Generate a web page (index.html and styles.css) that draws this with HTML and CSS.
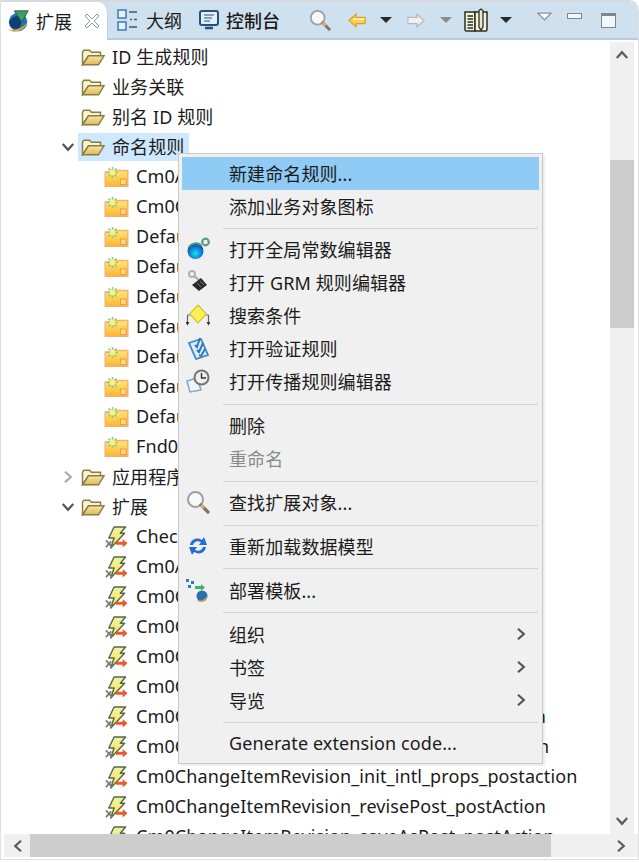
FILE: index.html
```html
<!DOCTYPE html>
<html lang="zh">
<head>
<meta charset="utf-8">
<title>扩展</title>
<link rel="stylesheet" href="styles.css">
</head>
<body>
<svg class="defs" width="0" height="0">
  <defs>
    <linearGradient id="ruleFill" x1="0" y1="0" x2="0" y2="1"><stop offset="0" stop-color="#ffe873"/><stop offset="1" stop-color="#fdb52f"/></linearGradient>
    <linearGradient id="boltFill" x1="0" y1="0" x2="0" y2="1"><stop offset="0" stop-color="#eef3a8"/><stop offset="1" stop-color="#ffe24a"/></linearGradient>
    <linearGradient id="folderFill" x1="0" y1="0" x2="0" y2="1"><stop offset="0" stop-color="#f6e6a6"/><stop offset="1" stop-color="#dcb957"/></linearGradient>
    <radialGradient id="ball" cx="0.500" cy="0.650" r="0.650"><stop offset="0" stop-color="#19e6ea"/><stop offset="0.550" stop-color="#0a82dc"/><stop offset="1" stop-color="#1b3f8f"/></radialGradient>
  </defs>
  <symbol id="folder" viewBox="0 0 24 17">
    <path d="M1.500 15.500V3L3 1.200H8.500L10.500 3.200H19.500V7H7.500L1.500 15.500Z" fill="#faf3cf" stroke="#8a7a45" stroke-width="1.400"/>
    <path d="M1.500 15.800L7.500 6.800H23L17.500 15.800Z" fill="url(#folderFill)" stroke="#8a7a45" stroke-width="1.400"/>
  </symbol>
  <symbol id="rule" viewBox="0 0 24 20">
    <path d="M.7 5H9L10 3.500H23.300V19.300H.7Z" fill="url(#ruleFill)" stroke="#f5ae74" stroke-width="1.400"/>
    <rect x="16" y="12" width="5.500" height="5.500" fill="#ffdc7c" stroke="#ee9c49" stroke-width="1"/>
    <path d="M8 0V11M2.500 5.500H13.500M4 1.500L12 9.500M12 1.500L4 9.500" stroke="#8fbf9f" stroke-width="1.600"/>
    <circle cx="8" cy="5.500" r="3" fill="#f7f56e"/>
  </symbol>
  <symbol id="bolt" viewBox="0 0 24 24">
    <path d="M10 1H22L16.500 7.500H21L6.500 23L10 12.500H4.500Z" fill="url(#boltFill)" stroke="#56684a" stroke-width="1.500" stroke-linejoin="round"/>
    <path d="M1.500 15L8 22M1.500 22L7 16" stroke="#74806a" stroke-width="1.800"/>
    <path d="M12 16.500H19V13.500L24 18L19 22.500V19.500H12Z" fill="#ea5a2c"/>
  </symbol>
  <symbol id="chev" viewBox="0 0 14 14">
    <path d="M4 1.800L9.800 7L4 12.200" fill="none" stroke="currentColor" stroke-width="2.200"/>
  </symbol>
  <symbol id="lens" viewBox="0 0 24 24">
    <circle cx="9.500" cy="9.500" r="7.500" fill="#f6f8fa" stroke="#9aa0a6" stroke-width="2"/>
    <path d="M15 15L22 22" stroke="#7a7467" stroke-width="3.200" stroke-linecap="round"/>
    <path d="M15 15L18 18" stroke="#e2b659" stroke-width="3"/>
  </symbol>
  <symbol id="drop" viewBox="0 0 12 6">
    <path d="M0 0H12L6 6Z" fill="currentColor"/>
  </symbol>
</svg>

<div class="window">
  <header class="tabbar">
    <div class="tab tab-active">
      <svg class="ic-tab" viewBox="0 0 26 26"><circle cx="12" cy="14" r="10" fill="#2a6fb0"/><path d="M2 14C5 8 12 6 17 8L14 20C9 23 4 21 2 14Z" fill="#0f3f6e"/><path d="M8 2H23L16 14Z" fill="#3f9f63" stroke="#1f5f49"/><path d="M1 22C8 24 15 22 22 15C19 23 8 28 1 22Z" fill="#e0a93a"/></svg>
      <span class="tab-label">扩展</span>
      <svg class="ic-close" viewBox="0 0 16 16"><path d="M3 1L8 6L13 1L15 3L10 8L15 13L13 15L8 10L3 15L1 13L6 8L1 3Z" fill="#fff" stroke="#8e959c"/></svg>
    </div>
    <div class="tab tab-outline">
      <svg class="ic-outline" viewBox="0 0 20 22"><rect x="1" y="1" width="8" height="8" fill="#e6f2fb" stroke="#2f74b5" stroke-width="1.400"/><rect x="1" y="13" width="8" height="8" fill="#e6f2fb" stroke="#2f74b5" stroke-width="1.400"/><path d="M12 3H20M13 10.500H15M17 10.500H20M12 18H20" stroke="#2f5f8a" stroke-width="1.600"/></svg>
      <span class="tab-label">大纲</span>
    </div>
    <div class="tab tab-console">
      <svg class="ic-console" viewBox="0 0 20 20"><rect x="1" y="1" width="18" height="14" rx="2" fill="#e6eef6" stroke="#24527f" stroke-width="2"/><path d="M5 5H15M5 8H13M5 11H11" stroke="#24527f"/><path d="M6 18H14" stroke="#24527f" stroke-width="2.500"/></svg>
      <span class="tab-label tab-bold">控制台</span>
    </div>
    <div class="tools">
      <svg class="t-search"><use href="#lens"/></svg>
      <svg class="t-back" viewBox="0 0 20 16"><path d="M1 8L9 1V4.500H19V11.500H9V15Z" fill="#ffd24d" stroke="#dc9f22" stroke-width="1.300"/><path d="M6 6.500H18" stroke="#fff3b5" stroke-width="2"/></svg>
      <svg class="t-drop t-drop-back"><use href="#drop"/></svg>
      <svg class="t-fwd" viewBox="0 0 20 16"><path d="M19 8L11 1V4.500H1V11.500H11V15Z" fill="#eef0f2" stroke="#b4b8bc" stroke-width="1.300"/></svg>
      <svg class="t-drop t-drop-fwd"><use href="#drop"/></svg>
      <svg class="t-book" viewBox="0 0 24 24"><path d="M1 4H11V23H2L1 22Z" fill="#f4f2d8" stroke="#2d2d26" stroke-width="1.500"/><path d="M11 4H23V22L22 23H11Z" fill="#f4f2d8" stroke="#2d2d26" stroke-width="1.500"/><path d="M3.500 8H9M3.500 11H9M3.500 14H9M3.500 17H9M3.500 20H9" stroke="#2d2d26" stroke-width="1.300"/><path d="M15 19V2.500L17 1L19 2.500V19L17 22Z" fill="#e9e7c8" stroke="#2d2d26" stroke-width="1.300"/></svg>
      <svg class="t-drop t-drop-book"><use href="#drop"/></svg>
      <svg class="t-view" viewBox="0 0 16 9"><path d="M1 1H15L8 8Z" fill="#fff" stroke="#8d949c" stroke-width="1.300"/></svg>
      <span class="t-min"></span>
      <span class="t-max"></span>
    </div>
  </header>

  <div class="body">
    <div class="main">
      <div class="tree">
        <div class="row l1"><span class="twist"></span><span class="node"><svg class="ic-folder"><use href="#folder"/></svg><span class="label">ID 生成规则</span></span></div>
        <div class="row l1"><span class="twist"></span><span class="node"><svg class="ic-folder"><use href="#folder"/></svg><span class="label">业务关联</span></span></div>
        <div class="row l1"><span class="twist"></span><span class="node"><svg class="ic-folder"><use href="#folder"/></svg><span class="label">别名 ID 规则</span></span></div>
        <div class="row l1"><svg class="twist twist-open"><use href="#chev"/></svg><span class="node node-sel"><svg class="ic-folder"><use href="#folder"/></svg><span class="label">命名规则</span></span></div>
        <div class="row l2"><svg class="ic-rule"><use href="#rule"/></svg><span class="label">Cm0AttrNamingRule</span></div>
        <div class="row l2"><svg class="ic-rule"><use href="#rule"/></svg><span class="label">Cm0ChangeNamingRule</span></div>
        <div class="row l2"><svg class="ic-rule"><use href="#rule"/></svg><span class="label">DefaultNamingRule</span></div>
        <div class="row l2"><svg class="ic-rule"><use href="#rule"/></svg><span class="label">DefaultNamingRule</span></div>
        <div class="row l2"><svg class="ic-rule"><use href="#rule"/></svg><span class="label">DefaultNamingRule</span></div>
        <div class="row l2"><svg class="ic-rule"><use href="#rule"/></svg><span class="label">DefaultNamingRule</span></div>
        <div class="row l2"><svg class="ic-rule"><use href="#rule"/></svg><span class="label">DefaultNamingRule</span></div>
        <div class="row l2"><svg class="ic-rule"><use href="#rule"/></svg><span class="label">DefaultNamingRule</span></div>
        <div class="row l2"><svg class="ic-rule"><use href="#rule"/></svg><span class="label">DefaultNamingRule</span></div>
        <div class="row l2"><svg class="ic-rule"><use href="#rule"/></svg><span class="label">Fnd0NamingRule</span></div>
        <div class="row l1"><svg class="twist twist-closed"><use href="#chev"/></svg><span class="node"><svg class="ic-folder"><use href="#folder"/></svg><span class="label">应用程序扩展点</span></span></div>
        <div class="row l1"><svg class="twist twist-open"><use href="#chev"/></svg><span class="node"><svg class="ic-folder"><use href="#folder"/></svg><span class="label">扩展</span></span></div>
        <div class="row l2"><svg class="ic-bolt"><use href="#bolt"/></svg><span class="label">CheckExtension</span></div>
        <div class="row l2"><svg class="ic-bolt"><use href="#bolt"/></svg><span class="label">Cm0AddExtension</span></div>
        <div class="row l2"><svg class="ic-bolt"><use href="#bolt"/></svg><span class="label">Cm0ChangeExtension</span></div>
        <div class="row l2"><svg class="ic-bolt"><use href="#bolt"/></svg><span class="label">Cm0ChangeExtension</span></div>
        <div class="row l2"><svg class="ic-bolt"><use href="#bolt"/></svg><span class="label">Cm0ChangeExtension</span></div>
        <div class="row l2"><svg class="ic-bolt"><use href="#bolt"/></svg><span class="label">Cm0ChangeExtension</span></div>
        <div class="row l2"><svg class="ic-bolt"><use href="#bolt"/></svg><span class="label">Cm0ChangeItemRevision_create_intl_postaction</span></div>
        <div class="row l2"><svg class="ic-bolt"><use href="#bolt"/></svg><span class="label">Cm0ChangeItemRevision_createPost_postAction</span></div>
        <div class="row l2"><svg class="ic-bolt"><use href="#bolt"/></svg><span class="label">Cm0ChangeItemRevision_init_intl_props_postaction</span></div>
        <div class="row l2"><svg class="ic-bolt"><use href="#bolt"/></svg><span class="label">Cm0ChangeItemRevision_revisePost_postAction</span></div>
        <div class="row l2"><svg class="ic-bolt"><use href="#bolt"/></svg><span class="label">Cm0ChangeItemRevision_saveAsPost_postAction</span></div>
      </div>
      <div class="vbar">
        <svg class="bar-up"><use href="#chev"/></svg>
        <div class="vtrack"><div class="vthumb"></div></div>
        <svg class="bar-down"><use href="#chev"/></svg>
      </div>
    </div>
    <div class="hbar">
      <svg class="bar-left"><use href="#chev"/></svg>
      <div class="htrack"><div class="hthumb"></div></div>
      <svg class="bar-right"><use href="#chev"/></svg>
    </div>
  </div>

  <div class="menu">
    <div class="item item-hover"><span class="mi"></span><span>新建命名规则...</span></div>
    <div class="item"><span class="mi"></span><span>添加业务对象图标</span></div>
    <div class="sep"></div>
    <div class="item"><span class="mi"><svg class="ic-menu" viewBox="0 0 24 24"><circle cx="9.500" cy="14" r="8" fill="url(#ball)"/><path d="M3 10C6 6 11 5 15 8" fill="none" stroke="#3f9f7a" stroke-width="2"/><circle cx="19.500" cy="5" r="3.300" fill="none" stroke="#5d9c80" stroke-width="2.200"/></svg></span><span>打开全局常数编辑器</span></div>
    <div class="item"><span class="mi"><svg class="ic-menu" viewBox="0 0 24 24"><circle cx="6" cy="4" r="3" fill="none" stroke="#b2b2b2" stroke-width="2"/><path d="M8 6L13 10" stroke="#b2b2b2" stroke-width="2.500"/><path d="M6 15L15 8L21 15L13 21Z" fill="#2a2a2a"/><path d="M11 13L15 17M14 11L18 15" stroke="#777" stroke-width="1"/></svg></span><span>打开 GRM 规则编辑器</span></div>
    <div class="item"><span class="mi"><svg class="ic-menu" viewBox="0 0 24 24"><path d="M1.500 12H5M22.500 12H19M1.500 12V20M22.500 12V20" fill="none" stroke="#666" stroke-width="1.200"/><path d="M12 2L20.500 11L12 20L3.500 11Z" fill="#fff04f" stroke="#d2bf44" stroke-width="1.200"/><path d="M-.5 19H3.500L1.500 22.500ZM20.500 19H24.500L22.500 22.500Z" fill="#333"/></svg></span><span>搜索条件</span></div>
    <div class="item"><span class="mi"><svg class="ic-menu" viewBox="0 0 24 24"><path d="M3 7L15 3L22 19L10 23Z" fill="#dcebf8" stroke="#3f86c9" stroke-width="1.800"/><path d="M9 9L11 11L14 2M11 14L13 16L17 7M13 19L15 20L19 13" fill="none" stroke="#2f74b5" stroke-width="1.900"/></svg></span><span>打开验证规则</span></div>
    <div class="item"><span class="mi"><svg class="ic-menu" viewBox="0 0 24 24"><path d="M1 12L11 9L15 21L4 23Z" fill="#eef5fb" stroke="#7ba7cf" stroke-width="1.500"/><circle cx="15.500" cy="8.500" r="7" fill="#eef0ee" stroke="#74766f" stroke-width="2"/><path d="M15.500 4V9H20" fill="none" stroke="#333" stroke-width="1.400"/></svg></span><span>打开传播规则编辑器</span></div>
    <div class="sep"></div>
    <div class="item"><span class="mi"></span><span>删除</span></div>
    <div class="item item-off"><span class="mi"></span><span>重命名</span></div>
    <div class="sep"></div>
    <div class="item"><span class="mi"><svg class="ic-menu"><use href="#lens"/></svg></span><span>查找扩展对象...</span></div>
    <div class="sep"></div>
    <div class="item"><span class="mi"><svg class="ic-menu" viewBox="0 0 24 24"><path d="M4 11C5 5 11 3 16 6L18 3L21 11L13 11L15 8C11 6 8 8 7 11Z" fill="#1f6fd6"/><path d="M20 13C19 19 13 21 8 18L6 21L3 13L11 13L9 16C13 18 16 16 17 13Z" fill="#1f6fd6"/></svg></span><span>重新加载数据模型</span></div>
    <div class="sep"></div>
    <div class="item"><span class="mi"><svg class="ic-menu" viewBox="0 0 24 24"><path d="M0 1H3V4H0ZM5 3H8V6H5ZM2 7H5V10H2Z" fill="#2a7fc4"/><path d="M9 8H15V6L19 9.500L15 13V11H9Z" fill="#3cb56a"/><circle cx="16" cy="18" r="5.500" fill="#2a6fb0"/><path d="M10 22C14 24 19 22 22 17C21 23 14 26 10 22Z" fill="#e0a93a"/></svg></span><span>部署模板...</span></div>
    <div class="sep"></div>
    <div class="item"><span class="mi"></span><span class="item-text">组织</span><svg class="sub"><use href="#chev"/></svg></div>
    <div class="item"><span class="mi"></span><span class="item-text">书签</span><svg class="sub"><use href="#chev"/></svg></div>
    <div class="item"><span class="mi"></span><span class="item-text">导览</span><svg class="sub"><use href="#chev"/></svg></div>
    <div class="sep"></div>
    <div class="item"><span class="mi"></span><span>Generate extension code...</span></div>
  </div>
</div>
</body>
</html>
```

FILE: styles.css
```css
* { box-sizing: border-box; }

html, body { margin: 0; height: 100%; }

body {
  background: #ffffff;
  color: #1b1b1b;
  font-family: "Noto Sans", "Noto Sans CJK SC", sans-serif;
  font-size: 18px;
  letter-spacing: 0.1px;
  overflow: hidden;
}

.defs { position: absolute; }

.window {
  position: relative;
  width: 639px;
  height: 860px;
  display: flex;
  flex-direction: column;
  border: 1px solid #dcdfe3;
  border-top: 2px solid #d6d9de;
  border-radius: 0 10px 0 0;
  overflow: hidden;
}

/* tab strip */
.tabbar {
  flex: none;
  height: 38px;
  display: flex;
  align-items: stretch;
  background: #cfe0ef;
  border-bottom: 2px solid #b9c9de;
}

.tab {
  display: flex;
  align-items: center;
  letter-spacing: 0;
}

.tab-active {
  width: 107px;
  margin-bottom: -2px;
  padding-left: 5px;
  background: #ffffff;
  border-right: 1px solid #c5cfdb;
  border-radius: 0 10px 0 0;
}

.tab-outline { padding: 0 8px 0 9px; }
.tab-console { padding-left: 9px; }

.tab-label { white-space: nowrap; }
.tab-bold { font-weight: 500; }

.ic-tab { width: 26px; height: 24px; margin-right: 4px; flex: none; }
.ic-close { width: 16px; height: 16px; margin-left: 12px; flex: none; }
.ic-outline { width: 20px; height: 22px; margin-right: 9px; flex: none; }
.ic-console { width: 20px; height: 20px; margin-right: 7px; flex: none; }

.tools {
  flex: 1;
  display: flex;
  align-items: center;
  padding-left: 29px;
}

.tools svg { flex: none; }

.t-search { width: 22px; height: 22px; }
.t-back { width: 18px; height: 15px; margin-left: 17px; }
.t-fwd { width: 18px; height: 15px; margin-left: 15px; }
.t-drop { width: 12px; height: 6px; color: #2a2a2a; }
.t-drop-back { margin-left: 14px; }
.t-drop-fwd { margin-left: 15px; color: #8c8c8c; }
.t-drop-book { margin-left: 12px; }
.t-book { width: 24px; height: 24px; margin-left: 12px; }
.t-view { width: 15px; height: 9px; margin: -8px 0 0 25px; }
.t-min {
  width: 15px;
  height: 6px;
  margin: -8px 0 0 15px;
  background: #f4f7fa;
  border: 1px solid #7e868e;
}
.t-max {
  width: 15px;
  height: 15px;
  margin: 0 0 0 19px;
  background: #f4f7fa;
  border: 1px solid #7e868e;
  border-top-width: 3px;
}

/* tree area */
.body {
  flex: 1;
  min-height: 0;
  display: flex;
  flex-direction: column;
  background: #ffffff;
  padding-bottom: 2px;
}

.main {
  flex: 1;
  min-height: 0;
  display: flex;
  padding: 2px 4px 0 0;
}

.tree {
  flex: 1;
  min-width: 0;
  overflow: hidden;
}

.row {
  height: 30px;
  display: flex;
  align-items: center;
  white-space: nowrap;
}

.label { padding-bottom: 2px; }

.l1 { padding-left: 60px; }
.l2 { padding-left: 103px; }

.twist {
  width: 14px;
  height: 14px;
  margin-right: 3px;
  flex: none;
  color: #555555;
}
.twist-open { transform: rotate(90deg); }
.twist-closed { color: #a8a8a8; }

.node {
  display: flex;
  align-items: center;
  height: 28px;
  padding: 0 5px 0 3px;
}
.node-sel { background: #cde8ff; }

.ic-folder { width: 24px; height: 17px; margin-right: 7px; flex: none; }
.ic-rule { width: 25px; height: 20px; margin-right: 7px; flex: none; }
.ic-bolt { width: 24px; height: 23px; margin-right: 8px; flex: none; }

/* scrollbars */
.vbar {
  flex: none;
  width: 24px;
  display: flex;
  flex-direction: column;
  align-items: center;
  background: #f0f0f0;
  color: #5a5a5a;
  padding: 6px 0 0;
}
.bar-up { width: 14px; height: 14px; transform: rotate(-90deg); margin: 0 0 8px; flex: none; }
.bar-down { width: 14px; height: 14px; transform: rotate(90deg); margin: 0 0 6px; flex: none; }
.vtrack { flex: 1; width: 100%; padding-top: 90px; }
.vthumb { height: 168px; background: #cdcdcd; }

.hbar {
  flex: none;
  height: 23px;
  display: flex;
  align-items: center;
  background: #f0f0f0;
  color: #5a5a5a;
  margin: 0 0 0 3px;
  padding: 0 10px 0 7px;
}
.bar-left { width: 14px; height: 14px; transform: rotate(180deg); flex: none; }
.bar-right { width: 14px; height: 14px; flex: none; }
.htrack { flex: 1; height: 100%; padding: 0 63px 0 5px; }
.hthumb { height: 100%; background: #cdcdcd; }

/* popup menu */
.menu {
  position: absolute;
  left: 177px;
  top: 151px;
  width: 365px;
  height: 611px;
  padding: 3px 3px 0;
  background: #f0f0f0;
  border: 1px solid #c9c9c9;
  box-shadow: 2px 2px 2px rgba(0, 0, 0, 0.08);
  display: flex;
  flex-direction: column;
}

.item {
  flex: none;
  height: 33px;
  padding-bottom: 2px;
  display: flex;
  align-items: center;
  white-space: nowrap;
}
.item-hover { background: #8fcbf5; }
.item-off { color: #8a8a8a; }
.item-text { flex: 1; }

.mi {
  width: 47px;
  flex: none;
  display: flex;
  align-items: center;
  padding-left: 4px;
}

.ic-menu { width: 24px; height: 24px; }

.sep {
  flex: none;
  height: 1px;
  margin: 5px 1px 4.85px 41px;
  background: #d4d4d4;
}

.sub {
  width: 14px;
  height: 14px;
  margin-right: 11px;
  color: #555555;
  flex: none;
}
```
